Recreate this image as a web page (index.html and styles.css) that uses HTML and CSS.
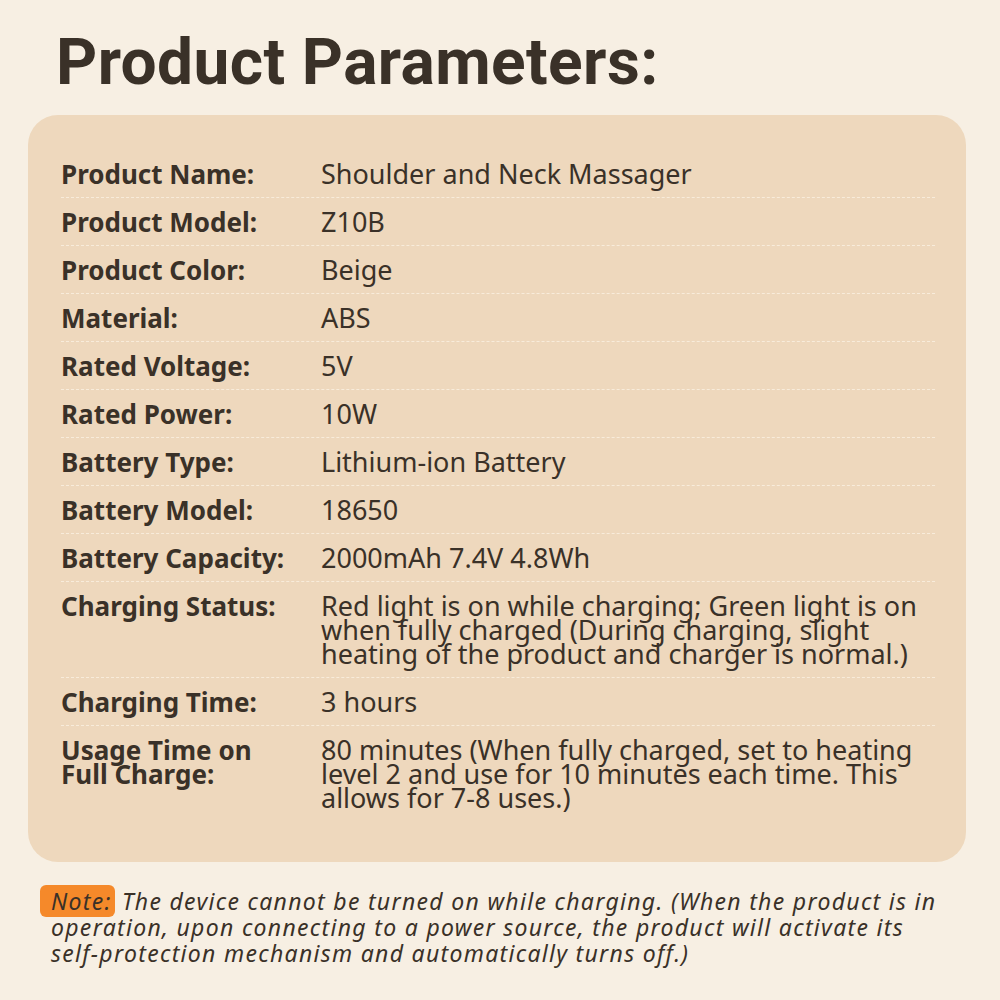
FILE: index.html
```html
<!DOCTYPE html>
<html lang="en">
<head>
<meta charset="utf-8">
<title>Product Parameters</title>
<link rel="stylesheet" href="styles.css">
</head>
<body>
<main class="page">
  <h1 class="title">Product Parameters:</h1>
  <section class="card">
    <div class="row"><div class="label">Product Name:</div><div class="value">Shoulder and Neck Massager</div></div>
    <div class="row"><div class="label">Product Model:</div><div class="value">Z10B</div></div>
    <div class="row"><div class="label">Product Color:</div><div class="value">Beige</div></div>
    <div class="row"><div class="label">Material:</div><div class="value">ABS</div></div>
    <div class="row"><div class="label">Rated Voltage:</div><div class="value">5V</div></div>
    <div class="row"><div class="label">Rated Power:</div><div class="value">10W</div></div>
    <div class="row"><div class="label">Battery Type:</div><div class="value">Lithium-ion Battery</div></div>
    <div class="row"><div class="label">Battery Model:</div><div class="value">18650</div></div>
    <div class="row"><div class="label">Battery Capacity:</div><div class="value">2000mAh 7.4V 4.8Wh</div></div>
    <div class="row"><div class="label">Charging Status:</div><div class="value">Red light is on while charging; Green light is on when fully charged (During charging, slight heating of the product and charger is normal.)</div></div>
    <div class="row"><div class="label">Charging Time:</div><div class="value">3 hours</div></div>
    <div class="row last"><div class="label">Usage Time on Full Charge:</div><div class="value">80 minutes (When fully charged, set to heating level 2 and use for 10 minutes each time. This allows for 7-8 uses.)</div></div>
  </section>
  <p class="note"><span class="tag">Note:</span> The device cannot be turned on while charging. (When the product is in operation, upon connecting to a power source, the product will activate its <span class="nowrap">self-protection</span> mechanism and automatically turns off.)</p>
</main>
</body>
</html>
```

FILE: styles.css
```css
html, body {
  margin: 0;
  padding: 0;
}
body {
  background: #f7efe3;
  color: #3a3128;
  font-family: "Noto Sans", "Open Sans", sans-serif;
  width: 1000px;
  height: 1000px;
  overflow: hidden;
}
.page {
  padding: 0 34px 0 28px;
}
.title {
  margin: 0;
  padding: 26px 0 0 28px;
  height: 115px;
  box-sizing: border-box;
  font-family: Roboto, "Noto Sans", sans-serif;
  font-weight: 700;
  font-size: 64px;
  line-height: 74px;
  letter-spacing: 0.4px;
  color: #3a3128;
}
.card {
  background: #eed8bd;
  border-radius: 30px;
  padding: 35px 31px 52px 33px;
  height: 747px;
  box-sizing: border-box;
}
.row {
  display: flex;
  padding: 12px 0 11px;
  border-bottom: 1px dashed #f8ecdb;
  font-size: 27px;
  line-height: 24px;
}
.row.last {
  border-bottom: none;
}
.label {
  width: 260px;
  padding-right: 30px;
  box-sizing: border-box;
  flex: none;
  font-weight: 700;
  font-size: 26px;
}
.value {
  flex: 1;
  font-weight: 400;
}
.note {
  margin: 0;
  padding: 26px 10px 0 23px;
  text-indent: -11px;
  font-style: italic;
  font-size: 23px;
  line-height: 26px;
  letter-spacing: 1.3px;
}
.tag {
  background: #f5892a;
  border-radius: 6px;
  padding: 0 3px 0 11px;
}
.nowrap {
  white-space: nowrap;
}
```
